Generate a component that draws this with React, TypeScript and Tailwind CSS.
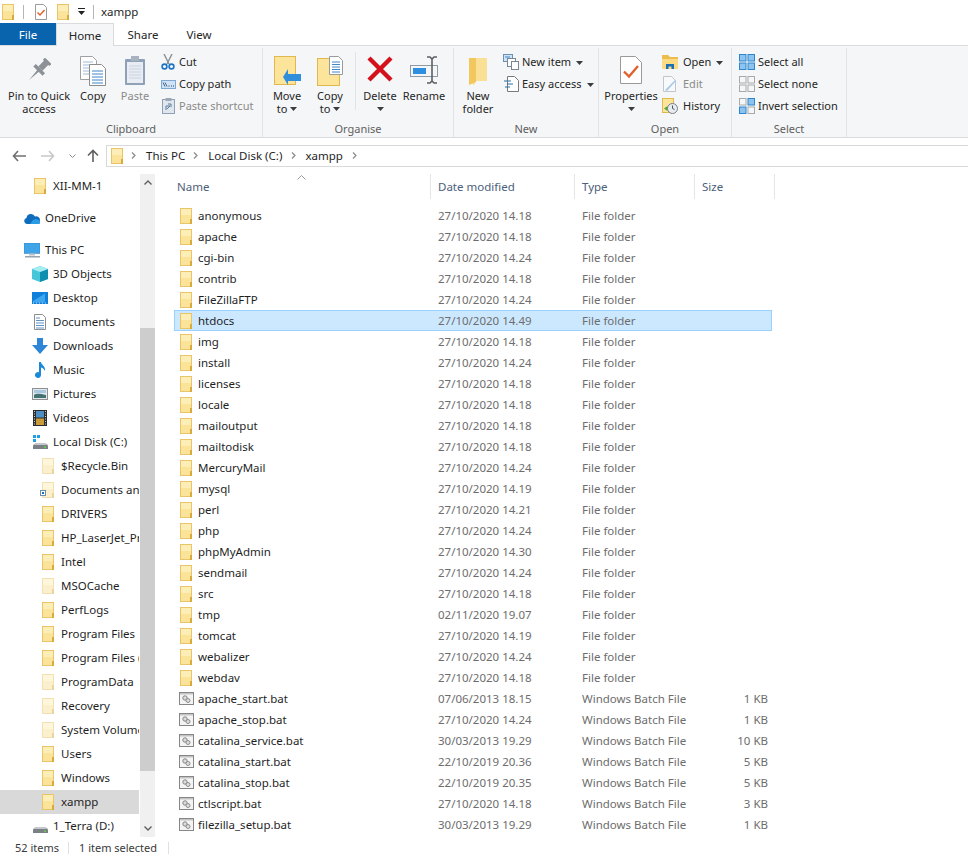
import type { ReactNode } from "react";

const files = [
  ["anonymous", "27/10/2020 14.18"],
  ["apache", "27/10/2020 14.18"],
  ["cgi-bin", "27/10/2020 14.24"],
  ["contrib", "27/10/2020 14.18"],
  ["FileZillaFTP", "27/10/2020 14.24"],
  ["htdocs", "27/10/2020 14.49"],
  ["img", "27/10/2020 14.18"],
  ["install", "27/10/2020 14.24"],
  ["licenses", "27/10/2020 14.18"],
  ["locale", "27/10/2020 14.18"],
  ["mailoutput", "27/10/2020 14.18"],
  ["mailtodisk", "27/10/2020 14.18"],
  ["MercuryMail", "27/10/2020 14.24"],
  ["mysql", "27/10/2020 14.19"],
  ["perl", "27/10/2020 14.21"],
  ["php", "27/10/2020 14.24"],
  ["phpMyAdmin", "27/10/2020 14.30"],
  ["sendmail", "27/10/2020 14.24"],
  ["src", "27/10/2020 14.18"],
  ["tmp", "02/11/2020 19.07"],
  ["tomcat", "27/10/2020 14.19"],
  ["webalizer", "27/10/2020 14.24"],
  ["webdav", "27/10/2020 14.18"],
];

const bats = [
  ["apache_start.bat", "07/06/2013 18.15", "1 KB"],
  ["apache_stop.bat", "27/10/2020 14.24", "1 KB"],
  ["catalina_service.bat", "30/03/2013 19.29", "10 KB"],
  ["catalina_start.bat", "22/10/2019 20.36", "5 KB"],
  ["catalina_stop.bat", "22/10/2019 20.35", "5 KB"],
  ["ctlscript.bat", "27/10/2020 14.18", "3 KB"],
  ["filezilla_setup.bat", "30/03/2013 19.29", "1 KB"],
];

const driveFolders = [
  { name: "$Recycle.Bin", faded: true },
  { name: "Documents and Settings", faded: true, link: true },
  { name: "DRIVERS" },
  { name: "HP_LaserJet_Professional" },
  { name: "Intel" },
  { name: "MSOCache", faded: true },
  { name: "PerfLogs" },
  { name: "Program Files" },
  { name: "Program Files (x86)" },
  { name: "ProgramData", faded: true },
  { name: "Recovery", faded: true },
  { name: "System Volume Information", faded: true },
  { name: "Users" },
  { name: "Windows" },
  { name: "xampp", selected: true },
];

function Folder({ className = "" }: { className?: string }) {
  return (
    <svg width="12" height="16" viewBox="0 0 12 16" className={"shrink-0 " + className}>
      <rect x="0" y="0" width="12" height="16" fill="#e9c469" />
      <rect x="1" y="1" width="10" height="14" fill="#fbe39a" />
      <rect x="1" y="1" width="10" height="6" fill="#fdeeb8" />
      <rect x="10" y="11" width="2" height="5" fill="#d9a93a" />
    </svg>
  );
}

function BatIcon() {
  return (
    <svg width="15" height="13" viewBox="0 0 15 13" className="shrink-0">
      <rect x="0.5" y="0.5" width="14" height="12" fill="#f4f4f4" stroke="#868686" />
      <rect x="1" y="1" width="13" height="1.5" fill="#c4c4c4" />
      <circle cx="6" cy="6" r="2.2" fill="#dcdcdc" stroke="#868686" />
      <circle cx="9" cy="8.5" r="2" fill="#dcdcdc" stroke="#8f8f8f" />
    </svg>
  );
}

function Caret() {
  return (
    <svg width="7" height="4" viewBox="0 0 7 4" className="inline-block shrink-0">
      <path d="M0 0h7L3.5 4z" fill="#3c3c3c" />
    </svg>
  );
}

function Chevron({ className = "" }: { className?: string }) {
  return (
    <svg width="5" height="7" viewBox="0 0 5 7" className={"shrink-0 " + className}>
      <path d="M1 .5 4 3.5 1 6.5" fill="none" stroke="#8a8a8a" strokeWidth="1.2" />
    </svg>
  );
}

function PinIcon() {
  return (
    <svg width="24" height="24" viewBox="0 0 24 24" className="mt-[2px]">
      <g transform="rotate(45 12 12)" fill="#8b9197">
        <rect x="7.500" y="-1" width="9" height="3" />
        <rect x="9" y="1" width="6" height="9" />
        <path d="M5.500 10h13v3.500h-13z" />
        <path d="M10.800 13h2.400L12 26z" />
      </g>
    </svg>
  );
}

function CopyIcon() {
  return (
    <svg width="26" height="30" viewBox="0 0 26 30">
      <path d="M.5.5h12l4 4v19H.5z" fill="#fff" stroke="#a0a0a0" />
      <path d="M3 6h10M3 9h10M3 12h10M3 15h10M3 18h10" stroke="#9db8d6" />
      <path d="M9.5 8.5h12l4 4v17h-16z" fill="#fff" stroke="#8d8d8d" />
      <path d="M12 15h11M12 18h11M12 21h11M12 24h11M12 27h11" stroke="#3f86cb" />
    </svg>
  );
}

function PasteIcon() {
  return (
    <svg width="22" height="30" viewBox="0 0 22 30">
      <rect x="1" y="3" width="20" height="26" rx="1" fill="#8fa1b6" />
      <rect x="3" y="6" width="16" height="21" fill="#e9edf3" />
      <path d="M5 10h12M5 13h12M5 16h12M5 19h12M5 22h12" stroke="#c9d3e0" />
      <rect x="7" y="0" width="8" height="5" fill="#a9b3bf" />
    </svg>
  );
}

function ScissorsIcon() {
  return (
    <svg width="14" height="16" viewBox="0 0 14 16">
      <path d="M3 0 8 10M11 0 6 10" stroke="#8a8f96" strokeWidth="1.4" fill="none" />
      <circle cx="3.5" cy="12.5" r="2.4" fill="none" stroke="#1b74c5" strokeWidth="1.6" />
      <circle cx="10.5" cy="12.5" r="2.4" fill="none" stroke="#1b74c5" strokeWidth="1.6" />
    </svg>
  );
}

function CopyPathIcon() {
  return (
    <svg width="15" height="9" viewBox="0 0 15 9">
      <rect x="0.5" y="0.5" width="14" height="8" fill="#cfe3f6" stroke="#7fa9d0" />
      <path d="M2 2.5 4 6.5M4 2.5 6 6.5" stroke="#26486b" strokeWidth=".8" />
      <path d="M7.5 6h1M10 6h1M12 6h1" stroke="#26486b" />
    </svg>
  );
}

function PasteShortcutIcon() {
  return (
    <svg width="13" height="16" viewBox="0 0 13 16">
      <rect x="0.5" y="1.5" width="12" height="14" fill="#dfe6ee" stroke="#8fa1b6" />
      <rect x="3.5" y="0" width="6" height="3" fill="#9fa9b5" />
      <path d="M4 12V8h4M8 8 5 11M6 6h3v3" stroke="#5a7ba0" fill="none" />
    </svg>
  );
}

function MoveToIcon() {
  return (
    <svg width="27" height="30" viewBox="0 0 27 30">
      <rect x="0.5" y="0.5" width="21" height="28" fill="#fce59b" stroke="#e0b84e" />
      <path d="M14 14v5h13v7H14v4L9 22l5-8z" transform="translate(0 -1)" fill="#2f8fdc" />
    </svg>
  );
}

function CopyToIcon() {
  return (
    <svg width="26" height="30" viewBox="0 0 26 30">
      <rect x="0.5" y="2.5" width="22" height="27" fill="#fce59b" stroke="#e0b84e" />
      <path d="M12.5.5h9l4 4v14h-13z" fill="#fff" stroke="#9a9a9a" />
      <path d="M15 6h8M15 8.5h8M15 11h8M15 13.5h8M15 16h8" stroke="#3f86cb" />
    </svg>
  );
}

function DeleteIcon() {
  return (
    <svg width="26" height="26" viewBox="0 0 26 26">
      <path d="M2 2 24 24M24 2 2 24" stroke="#d3101c" strokeWidth="4.4" />
    </svg>
  );
}

function RenameIcon() {
  return (
    <svg width="29" height="28" viewBox="0 0 29 28">
      <rect x="0.5" y="9.5" width="27" height="11" fill="#f4f6f8" stroke="#8f9aa5" />
      <rect x="3" y="12" width="13" height="6" fill="#2e8fe0" />
      <path d="M17 1h3l2 2 2-2h3M22 3v22M17 27h3l2-2 2 2h3" stroke="#5b6066" strokeWidth="1.6" fill="none" />
    </svg>
  );
}

function NewFolderIcon() {
  return (
    <svg width="18" height="28" viewBox="0 0 18 28" className="mt-[2px]">
      <path d="M0 0h18v23H7l-2 4-5-3z" fill="#fae094" />
      <path d="M0 0h7v24L0 27z" fill="#f2c75e" />
    </svg>
  );
}

function NewItemIcon() {
  return (
    <svg width="16" height="16" viewBox="0 0 16 16">
      <rect x="0.5" y="0.5" width="9" height="7" fill="#cfe3f6" stroke="#6d8fb0" />
      <rect x="4.5" y="4.5" width="8" height="8" fill="#fff" stroke="#7a8896" />
      <rect x="8.5" y="7.5" width="7" height="8" fill="#fff" stroke="#7a8896" />
      <path d="M2 3h5" stroke="#3f86cb" />
    </svg>
  );
}

function EasyAccessIcon() {
  return (
    <svg width="15" height="16" viewBox="0 0 15 16">
      <path d="M3.5.5h7l4 4v11h-11z" fill="#fff" stroke="#7a7a7a" />
      <path d="M0 5h7M3 8h6M1 11h5" stroke="#26709f" />
    </svg>
  );
}

function PropertiesIcon() {
  return (
    <svg width="22" height="28" viewBox="0 0 22 28">
      <path d="M.5.5h15l6 6v21H.5z" fill="#fff" stroke="#9a9a9a" />
      <path d="M4 15.5 9 20.5 18 10" fill="none" stroke="#e0622e" strokeWidth="2.4" />
    </svg>
  );
}

function OpenIcon() {
  return (
    <svg width="16" height="14" viewBox="0 0 16 14">
      <path d="M0 0h6l2 2h8v12H0z" fill="#eebb4d" />
      <rect x="0" y="4" width="16" height="10" fill="#fbdc84" />
      <path d="M4 14V9h8v5h-2.500v-2.500h-3V14z" fill="#1b6fb5" />
    </svg>
  );
}

function EditIcon() {
  return (
    <svg width="14" height="16" viewBox="0 0 14 16">
      <path d="M.5.500h8l4 4v11H.5z" fill="#f8f9fb" stroke="#c0c6cd" />
      <path d="M2 14 12 4l1 1L4 15z" fill="#a9cbe9" />
    </svg>
  );
}

function HistoryIcon() {
  return (
    <svg width="16" height="16" viewBox="0 0 16 16">
      <rect x="0.5" y="0.500" width="11" height="14" fill="#fce59b" stroke="#e0b84e" />
      <circle cx="10.500" cy="10.500" r="5" fill="#e9ecef" stroke="#74808b" />
      <path d="M10.500 7.500v3l2 1" stroke="#4a5560" fill="none" />
      <path d="M2 10.500 5.500 8v5z" fill="#4fa545" />
    </svg>
  );
}

function SelectIcon({ kind }: { kind: "all" | "none" | "invert" }) {
  const solid = "#8cc4ef";
  const cells: [number, number, boolean][] =
    kind === "all"
      ? [[0, 0, true], [8.500, 0, true], [0, 8.500, true], [8.500, 8.500, true]]
      : kind === "none"
      ? [[0, 0, false], [8.500, 0, false], [0, 8.500, false], [8.500, 8.500, false]]
      : [[0, 0, false], [8.500, 0, true], [0, 8.500, true], [8.500, 8.500, false]];
  return (
    <svg width="16" height="16" viewBox="0 0 16 16">
      {cells.map(([x, y, on]) => (
        <rect
          key={x + "-" + y}
          x={x + 0.5}
          y={y + 0.5}
          width="6.500"
          height="6.500"
          fill={on ? solid : "#f5f6f7"}
          stroke={on ? "#2f86cf" : "#a9a9a9"}
        />
      ))}
    </svg>
  );
}

function ChecklistIcon() {
  return (
    <svg width="12" height="16" viewBox="0 0 12 16" className="shrink-0">
      <path d="M.5.500h8l3 3v12h-11z" fill="#fff" stroke="#9a9a9a" />
      <path d="M2.500 8.500 5 11l4.500-5" fill="none" stroke="#e0622e" strokeWidth="1.500" />
    </svg>
  );
}

function OneDriveIcon() {
  return (
    <svg width="16" height="11" viewBox="0 0 16 11" className="shrink-0">
      <path d="M3 11a3 3 0 0 1-.5-5.900A4.500 4.500 0 0 1 11 3.500 3.700 3.700 0 0 1 16 7a3.500 3.500 0 0 1-1 4z" fill="#0f6cbd" />
      <path d="M6 11l3-4 3-1 4 1.500V8a3 3 0 0 1-1 3z" fill="#2a9ce6" />
    </svg>
  );
}

function PcIcon() {
  return (
    <svg width="16" height="15" viewBox="0 0 16 15" className="shrink-0">
      <rect x="0" y="0" width="16" height="10.500" fill="#3fa5e8" stroke="#2c7cbb" strokeWidth=".5" />
      <rect x="5" y="10.500" width="6" height="2" fill="#b9c2ca" />
      <rect x="1" y="13" width="15" height="1.500" fill="#9aa3ab" />
    </svg>
  );
}

function ObjectsIcon() {
  return (
    <svg width="16" height="16" viewBox="0 0 16 16" className="shrink-0">
      <path d="M8 0 16 3v10l-8 3-8-3V3z" fill="#46c6d8" />
      <path d="M8 6 16 3v10l-8 3z" fill="#0f8fb0" />
      <path d="M8 0 16 3 8 6 0 3z" fill="#a6edf2" />
    </svg>
  );
}

function DesktopIcon() {
  return (
    <svg width="16" height="12" viewBox="0 0 16 12" className="shrink-0">
      <rect width="16" height="12" fill="#0f7fdc" />
      <path d="M1 9 13 1.500V10.500H1z" fill="#3ea6ef" />
      <path d="M1 11h14" stroke="#cfe8fb" strokeDasharray="1 2" />
    </svg>
  );
}

function DocumentsIcon() {
  return (
    <svg width="12" height="16" viewBox="0 0 12 16" className="shrink-0">
      <path d="M.5.500h8l3 3v12h-11z" fill="#fff" stroke="#8d8d8d" />
      <path d="M2 4h4M2 6.500h8M2 9h8M2 11.500h8M2 14h8" stroke="#5f93c4" />
    </svg>
  );
}

function DownloadsIcon() {
  return (
    <svg width="16" height="16" viewBox="0 0 16 16" className="shrink-0">
      <path d="M5 0h6v7h5l-8 9-8-9h5z" fill="#2f86d6" />
    </svg>
  );
}

function MusicIcon() {
  return (
    <svg width="11" height="16" viewBox="0 0 11 16" className="shrink-0">
      <path d="M4 0h2c0 3 5 4 4 9-1-2-2-3-4-3.500V13a3 3 0 1 1-2-2.800z" fill="#1a8ad8" />
    </svg>
  );
}

function PicturesIcon() {
  return (
    <svg width="16" height="12" viewBox="0 0 16 12" className="shrink-0">
      <rect x="0.5" y="0.500" width="15" height="11" fill="#dfe9ef" stroke="#8f8f8f" />
      <path d="M2 7c3-2 6-1 12 0v3H2z" fill="#44736f" />
      <path d="M2 2h12v3H2z" fill="#a9c7de" />
    </svg>
  );
}

function VideosIcon() {
  return (
    <svg width="14" height="16" viewBox="0 0 14 16" className="shrink-0">
      <rect width="14" height="16" fill="#2c2c2c" />
      <rect x="3" y="1" width="8" height="6.500" fill="#4d8ec4" />
      <rect x="3" y="8.500" width="8" height="6.500" fill="#c99b3a" />
      <path d="M1.500 1v14M12.500 1v14" stroke="#d0d0d0" strokeDasharray="1 1.500" />
    </svg>
  );
}

function DiskIcon({ win }: { win?: boolean }) {
  return (
    <svg width="15" height="14" viewBox="0 0 15 14" className="shrink-0">
      {win && <rect x="0" y="0" width="3" height="3" fill="#1fa0e6" />}
      {win && <rect x="4" y="0" width="3" height="3" fill="#1fa0e6" />}
      {win && <rect x="0" y="4" width="3" height="3" fill="#1fa0e6" />}
      <path d="M1 9h13l1 2v3H0v-3z" fill="#7b8085" />
      <path d="M2 8h11l1 2H1z" fill="#c4c8cc" />
      <rect x="11" y="11.500" width="2" height="1.500" fill="#5fd04a" />
    </svg>
  );
}

function ShortcutBadge() {
  return (
    <span className="absolute left-[-2px] bottom-[2px] flex h-[6px] w-[6px] items-center justify-center border border-[#6d8fb0] bg-white">
      <span className="h-[2px] w-[2px] bg-[#1b6fb5]" />
    </span>
  );
}

function Large({
  w,
  icon,
  lines,
  disabled,
  caret,
}: {
  w: number;
  icon: ReactNode;
  lines: ReactNode[];
  disabled?: boolean;
  caret?: boolean;
}) {
  return (
    <div
      className={"flex flex-col items-center " + (disabled ? "text-[#8a8a8a]" : "text-[#262626]")}
      style={{ width: w }}
    >
      <div className="flex h-[37px] items-start justify-center pt-[4px]">{icon}</div>
      {lines.map((l, i) => (
        <div key={i} className="flex h-[13px] items-center gap-[3px] whitespace-nowrap leading-[13px]">
          {l}
          {caret && i === lines.length - 1 && <Caret />}
        </div>
      ))}
    </div>
  );
}

function Small({
  icon,
  label,
  disabled,
  caret,
  gap = 2,
}: {
  icon: ReactNode;
  label: string;
  disabled?: boolean;
  caret?: boolean;
  gap?: number;
}) {
  return (
    <div className={"flex h-[22px] items-center " + (disabled ? "text-[#8a8a8a]" : "text-[#262626]")}>
      <span className="flex w-[18px] shrink-0 items-center justify-center">{icon}</span>
      <span className="whitespace-nowrap" style={{ marginLeft: gap }}>
        {label}
      </span>
      {caret && (
        <span className="ml-[5px]">
          <Caret />
        </span>
      )}
    </div>
  );
}

function Group({ w, label, children }: { w: number; label: string; children: ReactNode }) {
  return (
    <div className="flex h-full flex-col border-r border-[#e2e3e4]" style={{ width: w }}>
      <div className="flex min-h-0 flex-1">{children}</div>
      <div className="h-[16px] text-center leading-[16px] text-[#5f5f5f]">{label}</div>
    </div>
  );
}

function Ribbon() {
  return (
    <div className="flex h-[92px] shrink-0 border-b border-[#dadbdc] bg-[#f5f6f7] pt-[2px] text-[11px]">
      <Group w={263} label="Clipboard">
        <div className="flex pl-[5px] pt-[4px]">
          <Large w={68} icon={<PinIcon />} lines={["Pin to Quick", "access"]} />
          <Large w={40} icon={<CopyIcon />} lines={["Copy"]} />
          <Large w={44} icon={<PasteIcon />} lines={["Paste"]} disabled />
          <div className="ml-[2px] -mt-[1px] flex flex-col">
            <Small icon={<ScissorsIcon />} label="Cut" />
            <Small icon={<CopyPathIcon />} label="Copy path" />
            <Small icon={<PasteShortcutIcon />} label="Paste shortcut" disabled />
          </div>
        </div>
      </Group>
      <Group w={191} label="Organise">
        <div className="flex pl-[4px] pt-[4px]">
          <Large w={40} icon={<MoveToIcon />} lines={["Move", "to"]} caret />
          <Large w={46} icon={<CopyToIcon />} lines={["Copy", "to"]} caret />
          <div className="mx-[2px] h-[58px] w-px bg-[#e2e3e4]" />
          <Large w={44} icon={<DeleteIcon />} lines={["Delete", <Caret key="c" />]} />
          <Large w={44} icon={<RenameIcon />} lines={["Rename"]} />
        </div>
      </Group>
      <Group w={145} label="New">
        <div className="flex pl-[4px] pt-[4px]">
          <Large w={40} icon={<NewFolderIcon />} lines={["New", "folder"]} />
          <div className="ml-[4px] -mt-[1px] flex flex-col">
            <Small icon={<NewItemIcon />} label="New item" caret />
            <Small icon={<EasyAccessIcon />} label="Easy access" caret />
          </div>
        </div>
      </Group>
      <Group w={133} label="Open">
        <div className="flex pl-[4px] pt-[4px]">
          <Large w={56} icon={<PropertiesIcon />} lines={["Properties", <Caret key="c" />]} />
          <div className="ml-[2px] -mt-[1px] flex flex-col">
            <Small icon={<OpenIcon />} label="Open" caret gap={4} />
            <Small icon={<EditIcon />} label="Edit" disabled gap={4} />
            <Small icon={<HistoryIcon />} label="History" gap={4} />
          </div>
        </div>
      </Group>
      <Group w={115} label="Select">
        <div className="ml-[6px] mt-[3px] flex flex-col">
          <Small icon={<SelectIcon kind="all" />} label="Select all" />
          <Small icon={<SelectIcon kind="none" />} label="Select none" />
          <Small icon={<SelectIcon kind="invert" />} label="Invert selection" />
        </div>
      </Group>
    </div>
  );
}

function NavRow({
  icon,
  label,
  indent,
  selected,
  faded,
  link,
  gap = 7,
  iconW = 12,
}: {
  icon: ReactNode;
  label: string;
  indent: number;
  selected?: boolean;
  faded?: boolean;
  link?: boolean;
  gap?: number;
  iconW?: number;
}) {
  return (
    <div
      className={"flex h-[24px] items-center overflow-hidden text-[#1f1f1f] " + (selected ? "bg-[#d9d9d9]" : "")}
      style={{ paddingLeft: indent }}
    >
      <span className="relative flex shrink-0 justify-center" style={{ width: iconW, marginRight: gap }}>
        <span className={faded ? "flex opacity-50" : "flex"}>{icon}</span>
        {link && <ShortcutBadge />}
      </span>
      <span className="whitespace-nowrap">{label}</span>
    </div>
  );
}

function Sidebar() {
  return (
    <div className="flex w-[172px] shrink-0">
      <div className="w-[139px] shrink-0 overflow-hidden">
        <NavRow icon={<Folder />} label="XII-MM-1" indent={34} />
        <div className="h-[8px]" />
        <NavRow icon={<OneDriveIcon />} label="OneDrive" indent={24} iconW={16} gap={5} />
        <div className="h-[8px]" />
        <NavRow icon={<PcIcon />} label="This PC" indent={24} iconW={16} gap={5} />
        <NavRow icon={<ObjectsIcon />} label="3D Objects" indent={32} iconW={16} gap={5} />
        <NavRow icon={<DesktopIcon />} label="Desktop" indent={32} iconW={16} gap={5} />
        <NavRow icon={<DocumentsIcon />} label="Documents" indent={32} iconW={16} gap={5} />
        <NavRow icon={<DownloadsIcon />} label="Downloads" indent={32} iconW={16} gap={5} />
        <NavRow icon={<MusicIcon />} label="Music" indent={32} iconW={16} gap={5} />
        <NavRow icon={<PicturesIcon />} label="Pictures" indent={32} iconW={16} gap={5} />
        <NavRow icon={<VideosIcon />} label="Videos" indent={32} iconW={16} gap={5} />
        <NavRow icon={<DiskIcon win />} label="Local Disk (C:)" indent={32} iconW={16} gap={5} />
        {driveFolders.map((f) => (
          <NavRow key={f.name} icon={<Folder />} label={f.name} indent={42} faded={f.faded} link={f.link} selected={f.selected} />
        ))}
        <NavRow icon={<DiskIcon />} label="1_Terra (D:)" indent={32} iconW={16} gap={5} />
      </div>
      <div className="ml-px flex h-[663px] w-[15px] shrink-0 flex-col bg-[#f0f0f0]">
        <div className="flex h-[17px] items-center justify-center">
          <svg width="8" height="5" viewBox="0 0 8 5">
            <path d="M.5 4.500 4 1l3.500 3.500" fill="none" stroke="#606060" strokeWidth="1.400" />
          </svg>
        </div>
        <div className="h-[137px]" />
        <div className="h-[443px] bg-[#cdcdcd]" />
        <div className="flex-1" />
        <div className="flex h-[17px] items-center justify-center">
          <svg width="8" height="5" viewBox="0 0 8 5">
            <path d="M.5.500 4 4 7.500.500" fill="none" stroke="#606060" strokeWidth="1.400" />
          </svg>
        </div>
      </div>
      <div className="w-[17px]" />
    </div>
  );
}

function FileRow({
  icon,
  name,
  date,
  type,
  size,
  selected,
}: {
  icon: ReactNode;
  name: string;
  date: string;
  type: string;
  size?: string;
  selected?: boolean;
}) {
  return (
    <div
      className={
        "flex h-[21px] w-[598px] items-center border " +
        (selected ? "border-[#99d1ff] bg-[#cce8ff]" : "border-transparent")
      }
    >
      <div className="flex w-[256px] shrink-0 items-center text-[#1f1f1f]">
        <span className="flex w-[23px] shrink-0 justify-center pr-px">{icon}</span>
        <span>{name}</span>
      </div>
      <div className="w-[144px] shrink-0 pl-[7px] text-[#6d6d6d]">{date}</div>
      <div className="w-[120px] shrink-0 pl-[7px] text-[#6d6d6d]">{type}</div>
      <div className="flex-1 pr-[3px] text-right text-[#6d6d6d]">{size}</div>
    </div>
  );
}

function HeaderCell({ w, label }: { w: number; label: string }) {
  return (
    <div className="flex h-[25px] shrink-0 items-center border-r border-[#e5e5e5] pl-[7px] text-[#4c607a]" style={{ width: w }}>
      {label}
    </div>
  );
}

export default function App() {
  return (
    <div
      className="flex h-[854px] w-[968px] flex-col overflow-hidden bg-white text-[11.5px] text-[#1f1f1f]"
      style={{ fontFamily: '"Noto Sans", "Open Sans", sans-serif' }}
    >
      {/* title bar */}
      <div className="flex h-[23px] shrink-0 items-center pl-[2px]">
        <Folder />
        <div className="ml-[9px] h-[14px] w-px bg-[#b5b5b5]" />
        <div className="ml-[11px]">
          <ChecklistIcon />
        </div>
        <div className="ml-[10px]">
          <Folder />
        </div>
        <svg width="7" height="7" viewBox="0 0 7 7" className="ml-[9px]">
          <path d="M0 0h7v1H0zM0 3h7L3.500 7z" fill="#222" />
        </svg>
        <div className="ml-[8px] h-[14px] w-px bg-[#b5b5b5]" />
        <span className="ml-[7px]">xampp</span>
      </div>

      {/* tabs */}
      <div className="flex h-[23px] shrink-0 items-stretch border-b border-[#dadbdc]">
        <div className="flex w-[56px] items-center justify-center bg-[#0a63ad] pt-[2px] text-white">File</div>
        <div className="relative z-10 -mb-px flex w-[58px] items-center justify-center border-x border-t border-[#dadbdc] bg-[#f5f6f7] pt-[2px] text-[#262626]">
          Home
        </div>
        <div className="flex w-[58px] items-center justify-center pt-[2px] text-[#262626]">Share</div>
        <div className="flex w-[54px] items-center justify-center pt-[2px] text-[#262626]">View</div>
      </div>

      <Ribbon />

      {/* address row */}
      <div className="flex h-[32px] shrink-0 items-center pt-[3px]">
        <div className="flex w-[106px] shrink-0 items-center">
          <svg width="14" height="12" viewBox="0 0 14 12" className="ml-[12px]">
            <path d="M6 1 1.500 6 6 11M2 6h12" fill="none" stroke="#707070" strokeWidth="1.600" />
          </svg>
          <svg width="14" height="12" viewBox="0 0 14 12" className="ml-[15px]">
            <path d="M8 1l4.500 5L8 11M12 6H0" fill="none" stroke="#c8c8c8" strokeWidth="1.600" />
          </svg>
          <svg width="7" height="4" viewBox="0 0 7 4" className="ml-[14px]">
            <path d="M.5.500 3.500 3.500 6.500.500" fill="none" stroke="#8a8a8a" />
          </svg>
          <svg width="12" height="13" viewBox="0 0 12 13" className="ml-[11px]">
            <path d="M1 6.500 6 1.500l5 5M6 2v11" fill="none" stroke="#5f5f5f" strokeWidth="1.600" />
          </svg>
        </div>
        <div className="flex h-[22px] flex-1 items-center border-y border-l border-[#d9d9d9] pl-[4px]">
          <Folder />
          <Chevron className="ml-[8px]" />
          <span className="ml-[10px]">This PC</span>
          <Chevron className="ml-[8px]" />
          <span className="ml-[10px]">Local Disk (C:)</span>
          <Chevron className="ml-[9px]" />
          <span className="ml-[9px]">xampp</span>
          <Chevron className="ml-[9px]" />
        </div>
      </div>

      {/* main */}
      <div className="flex min-h-0 flex-1 pt-[4px]">
        <Sidebar />
        <div className="min-w-0 flex-1">
          <div className="relative flex">
            <div className="flex h-[25px] w-[259px] shrink-0 items-center border-r border-[#e5e5e5] pl-[5px] text-[#4c607a]">Name</div>
            <svg width="9" height="5" viewBox="0 0 9 5" className="absolute left-[125px] top-[1px]">
              <path d="M.5 4.500 4.500.500l4 4" fill="none" stroke="#9a9a9a" />
            </svg>
            <HeaderCell w={144} label="Date modified" />
            <HeaderCell w={120} label="Type" />
            <HeaderCell w={80} label="Size" />
          </div>
          <div className="pl-[2px] pt-[6px]">
            {files.map(([name, date]) => (
              <FileRow key={name} icon={<Folder />} name={name} date={date} type="File folder" selected={name === "htdocs"} />
            ))}
            {bats.map(([name, date, size]) => (
              <FileRow key={name} icon={<BatIcon />} name={name} date={date} type="Windows Batch File" size={size} />
            ))}
          </div>
        </div>
      </div>

      {/* status bar */}
      <div className="flex h-[17px] shrink-0 items-center pt-[5px] text-[11px] text-[#3a3a3a]">
        <span className="w-[68px] pl-[15px]">52 items</span>
        <div className="h-[12px] w-px bg-[#e0e0e0]" />
        <span className="w-[99px] whitespace-nowrap pl-[10px]">1 item selected</span>
        <div className="h-[12px] w-px bg-[#e0e0e0]" />
      </div>
    </div>
  );
}
